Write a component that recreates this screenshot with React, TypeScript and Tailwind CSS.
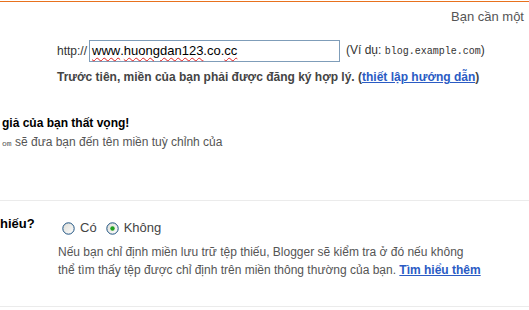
import React from "react";

function Radio({ checked }: { checked?: boolean }) {
  return (
    <svg width="13" height="13" viewBox="0 0 13 13" className="shrink-0">
      <defs>
        <linearGradient id={checked ? "rg1" : "rg0"} x1="0" y1="0" x2="1" y2="1">
          <stop offset="0" stopColor="#dcdcd6" />
          <stop offset="1" stopColor="#ffffff" />
        </linearGradient>
      </defs>
      <circle cx="6.5" cy="6.5" r="5.7" fill={`url(#${checked ? "rg1" : "rg0"})`} stroke="#1c5180" strokeWidth="1" />
      {checked && <circle cx="6.5" cy="6.5" r="2.2" fill="#21a121" />}
    </svg>
  );
}

export default function App() {
  return (
    <div className="w-[529px] h-[310px] overflow-hidden bg-white font-['Liberation_Sans',Arial,sans-serif] text-[12px] leading-[18px] text-[#555]">
      <div className="mt-px h-px bg-[#e8711e]" />

      <div className="flex justify-end pr-[5px] pt-[7px] text-[13px] leading-[16px] text-[#555]">Bạn cần một</div>

      <div className="mt-[15px] flex items-center pl-[57px]">
        <span className="mr-[2px] text-[#333]">http://</span>
        <div className="flex h-[22px] w-[251px] items-center border border-[#7f9db9] px-[2px] text-[13px] text-black">
          <span className="underline decoration-wavy decoration-[#e02020] decoration-1 underline-offset-2">www</span>
          .
          <span className="underline decoration-wavy decoration-[#e02020] decoration-1 underline-offset-2">huongdan123</span>
          .co.
          <span className="underline decoration-wavy decoration-[#e02020] decoration-1 underline-offset-2">cc</span>
        </div>
        <span className="ml-[6px] text-[#333]">
          (Ví dụ: <span className="font-['Liberation_Mono',monospace] text-[10px]">blog.example.com</span>)
        </span>
      </div>

      <p className="mt-[6px] pl-[57px] font-bold text-[#444]">
        Trước tiên, miền của bạn phải được đăng ký hợp lý. (
        <a className="text-[#2a5bc4] underline">thiết lập hướng dẫn</a>)
      </p>

      <div className="mt-[28px] pl-[2px]">
        <p className="font-bold text-black">giả của bạn thất vọng!</p>
        <p className="mt-px text-[#555]">
          <span className="font-['Liberation_Mono',monospace] text-[8px]">om</span> sẽ đưa bạn đến tên miền tuỳ chỉnh của
        </p>
      </div>

      <div className="mt-[47px] h-px bg-[#ebebeb]" />

      <div className="flex pt-[14px]">
        <div className="w-[58px] shrink-0 text-[13px] font-bold text-black">hiếu?</div>
        <div className="pt-[5px]">
          <div className="flex items-center gap-[9px] text-[13px] leading-[16px] text-[#444]">
            <span className="ml-[4px] flex items-center gap-[5px]">
              <Radio /> Có
            </span>
            <span className="flex items-center gap-[5px]">
              <Radio checked /> Không
            </span>
          </div>
          <p className="mt-[7px] text-[#555]">
            Nếu bạn chỉ định miền lưu trữ tệp thiếu, Blogger sẽ kiểm tra ở đó nếu không
            <br />
            thể tìm thấy tệp được chỉ định trên miền thông thường của bạn.{" "}
            <a className="font-bold text-[#2a5bc4] underline">Tìm hiểu thêm</a>
          </p>
        </div>
      </div>

      <div className="mt-[27px] h-px bg-[#ebebeb]" />
    </div>
  );
}
